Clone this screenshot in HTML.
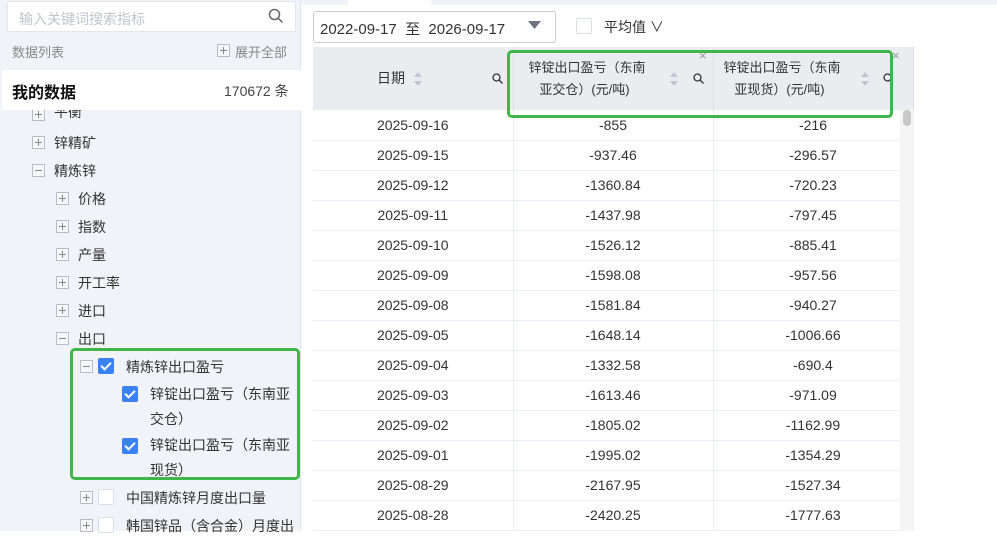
<!DOCTYPE html>
<html><head><meta charset="utf-8"><style>
*{box-sizing:border-box;margin:0;padding:0}
body{width:997px;height:531px;overflow:hidden;background:#fff;font-family:"Liberation Sans","Noto Sans CJK SC",sans-serif;position:relative;color:#333}
.side{position:absolute;left:0;top:0;width:301px;height:531px;background:#f2f3f8;border-right:1px solid #e0e2ea}
.search{position:absolute;left:7px;top:1px;width:289px;height:31px;background:#fff;border:1px solid #e4e6ee;border-radius:2px;font-size:14px;color:#c0c4cc;padding:7px 11px}
.abs{position:absolute;white-space:nowrap}
.pbox{position:absolute;width:13px;height:13px;border:1px solid #b8bcc8;background:#f7f8fb}
.pbox:before{content:"";position:absolute;left:2px;top:5px;width:7px;height:1px;background:#888}
.pbox.p:after{content:"";position:absolute;left:5px;top:2px;width:1px;height:7px;background:#888}
.cb{position:absolute;width:16px;height:16px;border-radius:2px;background:#3b82f6}
.cb:after{content:"";position:absolute;left:5px;top:2px;width:4px;height:8px;border:solid #fff;border-width:0 2px 2px 0;transform:rotate(45deg)}
.cbe{position:absolute;width:16px;height:16px;border-radius:2px;background:#fff;border:1px solid #dcdfe6}
.t{font-size:14px;color:#333}
.green{position:absolute;border:3px solid #3fb54a;border-radius:5px}
table{position:absolute;left:313px;top:47px;border-collapse:collapse;font-size:14px}
td{width:200px;height:30px;text-align:center;border-bottom:1px solid #ebeef5;border-right:1px solid #ebeef5;color:#333}
th{width:200px;height:63px;background:#ebecf0;font-weight:normal;font-size:13px;color:#333;border-right:1px solid #dcdfe6;line-height:22px;position:relative}
.s{position:absolute}
</style></head><body>
<div class="side">
<div class="search">输入关键词搜索指标</div>
<svg class="abs" style="left:268px;top:8px" width="16" height="16"><circle cx="6.5" cy="6.5" r="5" fill="none" stroke="#666" stroke-width="1.5"/><line x1="10" y1="10" x2="14.5" y2="14.5" stroke="#666" stroke-width="1.5"/></svg>
<div class="abs" style="left:12px;top:42px;font-size:13px;color:#888">数据列表</div>
<div class="pbox p" style="left:217px;top:44px"></div>
<div class="abs" style="left:235px;top:42px;font-size:13px;color:#888">展开全部</div>
<div class="pbox p" style="left:32px;top:108px"></div>
<div class="abs t" style="left:54px;top:102px">平衡</div>
<div class="abs" style="left:2px;top:70px;width:299px;height:40px;background:#fff"></div>
<div class="abs" style="left:12px;top:79px;font-size:16px;font-weight:bold;color:#111">我的数据</div>
<div class="abs" style="left:224px;top:81px;font-size:14px;color:#444">170672 条</div>
<div class="pbox p" style="left:32px;top:136px"></div><div class="abs t" style="left:54px;top:133px">锌精矿</div>
<div class="pbox" style="left:32px;top:164px"></div><div class="abs t" style="left:54px;top:161px">精炼锌</div>
<div class="pbox p" style="left:56px;top:192px"></div><div class="abs t" style="left:78px;top:189px">价格</div>
<div class="pbox p" style="left:56px;top:220px"></div><div class="abs t" style="left:78px;top:217px">指数</div>
<div class="pbox p" style="left:56px;top:248px"></div><div class="abs t" style="left:78px;top:245px">产量</div>
<div class="pbox p" style="left:56px;top:276px"></div><div class="abs t" style="left:78px;top:273px">开工率</div>
<div class="pbox p" style="left:56px;top:304px"></div><div class="abs t" style="left:78px;top:301px">进口</div>
<div class="pbox" style="left:56px;top:332px"></div><div class="abs t" style="left:78px;top:329px">出口</div>
<div class="pbox" style="left:80px;top:360px"></div><div class="cb" style="left:98px;top:358px"></div><div class="abs t" style="left:126px;top:357px">精炼锌出口盈亏</div>
<div class="cb" style="left:122px;top:386px"></div><div class="abs t" style="left:150px;top:382px;line-height:25px">锌锭出口盈亏（东南亚<br>交仓）</div>
<div class="cb" style="left:122px;top:438px"></div><div class="abs t" style="left:150px;top:433px;line-height:25px">锌锭出口盈亏（东南亚<br>现货）</div>
<div class="pbox p" style="left:80px;top:491px"></div><div class="cbe" style="left:98px;top:489px"></div><div class="abs t" style="left:126px;top:488px">中国精炼锌月度出口量</div>
<div class="pbox p" style="left:80px;top:519px"></div><div class="cbe" style="left:98px;top:517px"></div><div class="abs t" style="left:126px;top:516px">韩国锌品（含合金）月度出</div>
<div class="green" style="left:70px;top:348px;width:230px;height:132px"></div>
</div>
<div class="abs" style="left:301px;top:0;width:696px;height:5px;background:#f2f3f8"></div>
<div class="abs" style="left:348px;top:0;width:83px;height:5px;background:#fff"></div>
<div class="abs" style="left:313px;top:11px;width:243px;height:32px;border:1px solid #c8cbd3;border-radius:3px;font-size:15px;padding:6px 6px;color:#333">2022-09-17 &nbsp;至 &nbsp;2026-09-17</div>
<svg class="abs" style="left:528px;top:21px" width="13" height="10"><path d="M0 0H13L6.5 8Z" fill="#6b7280"/></svg>
<div class="cbe" style="left:576px;top:18px"></div>
<div class="abs" style="left:604px;top:17px;font-size:14px">平均值 ∨</div>
<table>
<tr><th><span style="position:absolute;left:64px;top:20px;font-size:14px">日期</span></th>
<th style="text-align:left;padding-left:15px">锌锭出口盈亏（东南<br>&nbsp;&nbsp;&nbsp;亚交仓）(元/吨)</th>
<th style="text-align:left;padding-left:10px">锌锭出口盈亏（东南<br>&nbsp;&nbsp;&nbsp;亚现货）(元/吨)</th></tr>
<tr><td>2025-09-16</td><td>-855</td><td>-216</td></tr>
<tr><td>2025-09-15</td><td>-937.46</td><td>-296.57</td></tr>
<tr><td>2025-09-12</td><td>-1360.84</td><td>-720.23</td></tr>
<tr><td>2025-09-11</td><td>-1437.98</td><td>-797.45</td></tr>
<tr><td>2025-09-10</td><td>-1526.12</td><td>-885.41</td></tr>
<tr><td>2025-09-09</td><td>-1598.08</td><td>-957.56</td></tr>
<tr><td>2025-09-08</td><td>-1581.84</td><td>-940.27</td></tr>
<tr><td>2025-09-05</td><td>-1648.14</td><td>-1006.66</td></tr>
<tr><td>2025-09-04</td><td>-1332.58</td><td>-690.4</td></tr>
<tr><td>2025-09-03</td><td>-1613.46</td><td>-971.09</td></tr>
<tr><td>2025-09-02</td><td>-1805.02</td><td>-1162.99</td></tr>
<tr><td>2025-09-01</td><td>-1995.02</td><td>-1354.29</td></tr>
<tr><td>2025-08-29</td><td>-2167.95</td><td>-1527.34</td></tr>
<tr><td>2025-08-28</td><td>-2420.25</td><td>-1777.63</td></tr>
</table>
<svg class="s" style="left:414px;top:72px" width="8" height="14"><path d="M4 0L8 5H0Z M4 14L8 9H0Z" fill="#c4c7cf"/></svg>
<svg class="s" style="left:670px;top:72px" width="8" height="14"><path d="M4 0L8 5H0Z M4 14L8 9H0Z" fill="#c4c7cf"/></svg>
<svg class="s" style="left:861px;top:72px" width="8" height="14"><path d="M4 0L8 5H0Z M4 14L8 9H0Z" fill="#c4c7cf"/></svg>
<svg class="s" style="left:492px;top:73px" width="11" height="11"><circle cx="4.5" cy="4.5" r="3.5" fill="none" stroke="#333" stroke-width="1.3"/><line x1="7" y1="7" x2="10.5" y2="10.5" stroke="#333" stroke-width="1.3"/></svg>
<svg class="s" style="left:693px;top:73px" width="11" height="11"><circle cx="4.5" cy="4.5" r="3.5" fill="none" stroke="#333" stroke-width="1.3"/><line x1="7" y1="7" x2="10.5" y2="10.5" stroke="#333" stroke-width="1.3"/></svg>
<svg class="s" style="left:883px;top:73px" width="8" height="11"><circle cx="4.5" cy="4.5" r="3.5" fill="none" stroke="#333" stroke-width="1.3"/><line x1="7" y1="7" x2="10.5" y2="10.5" stroke="#333" stroke-width="1.3"/></svg>
<div class="s" style="left:699px;top:48px;font-size:13px;color:#999">×</div>
<div class="s" style="left:892px;top:48px;font-size:13px;color:#999">×</div>
<div class="abs" style="left:900px;top:110px;width:13px;height:421px;background:#f5f5f5"></div>
<div class="abs" style="left:903px;top:110px;width:8px;height:16px;background:#c8c8c8;border-radius:4px"></div>
<div class="green" style="left:507px;top:50px;width:386px;height:68px;border-radius:5px"></div>
</body></html>
